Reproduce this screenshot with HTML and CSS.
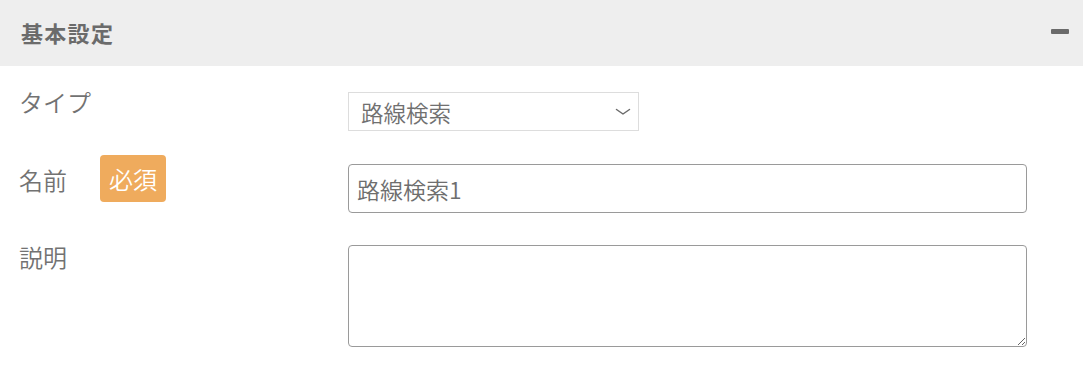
FILE: index.html
```html
<!DOCTYPE html>
<html lang="ja">
<head>
<meta charset="utf-8">
<link rel="stylesheet" href="styles.css">
</head>
<body>
<section class="panel">
  <header class="panel-head">
    <h2 class="panel-title">基本設定</h2>
    <span class="collapse" aria-label="折りたたむ"></span>
  </header>
  <div class="panel-body">
    <div class="row row-type">
      <div class="label"><span class="label-text">タイプ</span></div>
      <div class="control">
        <div class="select">
          <span class="select-text">路線検索</span>
          <svg class="chevron" width="16" height="8" viewBox="0 0 16 8"><path d="M1.5 1.5 L8 6 L14.5 1.5" fill="none" stroke="#6b6b6b" stroke-width="1.5" stroke-linecap="round" stroke-linejoin="round"/></svg>
        </div>
      </div>
    </div>
    <div class="row row-name">
      <div class="label"><span class="label-text">名前</span><span class="badge">必須</span></div>
      <div class="control">
        <input class="input" type="text" value="路線検索1">
      </div>
    </div>
    <div class="row row-desc">
      <div class="label"><span class="label-text">説明</span></div>
      <div class="control">
        <textarea class="textarea"></textarea>
      </div>
    </div>
  </div>
</section>
</body>
</html>
```
FILE: styles.css
```css
html, body {
  margin: 0;
  padding: 0;
  background: #ffffff;
}
body {
  font-family: "Noto Sans CJK JP", "Noto Sans", sans-serif;
  color: #6e6e6e;
  width: 1083px;
  height: 381px;
  overflow: hidden;
}
.panel-head {
  height: 66px;
  background: #eeeeee;
  display: flex;
  align-items: center;
  justify-content: space-between;
  padding: 0 14px 0 21px;
  box-sizing: border-box;
}
.panel-title {
  margin: 0;
  font-size: 22px;
  font-weight: 700;
  letter-spacing: 1.3px;
  color: #6b6b6b;
  line-height: 1;
  margin-top: -3px;
}
.collapse {
  width: 18px;
  height: 5px;
  background: #6a6a6a;
  border-radius: 1px;
  margin-top: -3px;
}
.panel-body {
  padding: 26px 0 0 19px;
}
.row {
  display: flex;
  align-items: flex-start;
}
.label {
  width: 329px;
  flex: none;
  display: flex;
  align-items: center;
  font-size: 24px;
  font-weight: 350;
  line-height: 30px;
  color: #727272;
}
.label-text {
  width: 81px;
  flex: none;
}
.row-type .label { margin-top: -5px; }
.row-name { margin-top: 25px; }
.row-name .label { height: 47px; }
.row-name .control { padding-top: 9px; }
.row-desc { margin-top: 34px; }
.row-desc .label { margin-top: -5px; }
.badge {
  width: 66px;
  height: 47px;
  box-sizing: border-box;
  background: #efab5d;
  color: #ffffff;
  border-radius: 4px;
  display: flex;
  align-items: center;
  justify-content: center;
  font-size: 24px;
  margin-top: -2px;
}
.select {
  width: 291px;
  height: 39px;
  box-sizing: border-box;
  border: 1px solid #dddddd;
  display: flex;
  align-items: center;
  justify-content: space-between;
  padding: 0 7px 0 12px;
}
.select-text {
  font-size: 22.5px;
  font-weight: 350;
  color: #707070;
}
.chevron {
  margin-top: 1px;
}
.input {
  display: block;
  width: 679px;
  height: 49px;
  box-sizing: border-box;
  border: 1px solid #9a9a9a;
  border-radius: 4px;
  padding: 0 8px;
  font-family: "Noto Sans CJK JP", "Noto Sans", sans-serif;
  font-size: 23px;
  font-weight: 350;
  color: #6e6e6e;
  outline: none;
  margin-top: -1px;
}
.row-desc .control { margin-top: -2px; }
.textarea {
  display: block;
  width: 679px;
  height: 102px;
  box-sizing: border-box;
  border: 1px solid #9a9a9a;
  border-radius: 4px;
  padding: 6px 8px;
  margin: 0;
  font-family: "Noto Sans CJK JP", "Noto Sans", sans-serif;
  font-size: 22px;
  resize: both;
  outline: none;
}
```
